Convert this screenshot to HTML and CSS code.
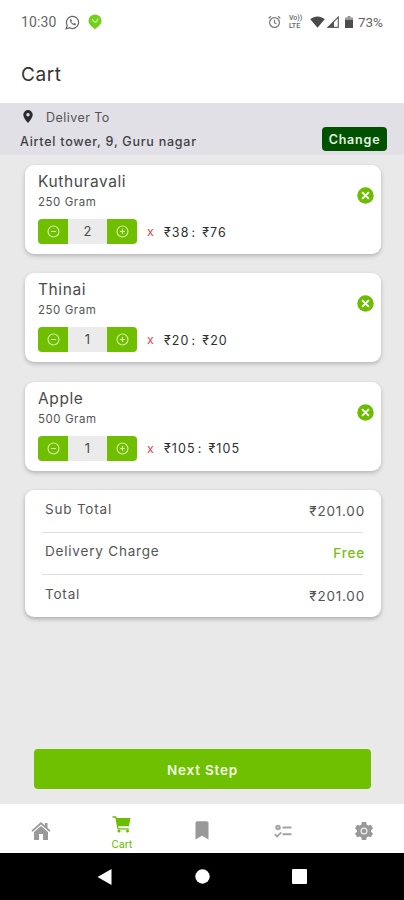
FILE: index.html
```
<!DOCTYPE html>
<html lang="en">
<head>
    <meta charset="UTF-8">
    <meta name="viewport" content="width=device-width, initial-scale=1.0">
    <title>Cart</title>
    <link rel="stylesheet" href="styles.css">
</head>
<body>
    <!-- Shared icons -->
    <svg class="icon-defs">
        <symbol id="minus" viewBox="0 0 14 14">
            <circle cx="7" cy="7" r="5.9" fill="none" stroke="#d5f3ac" stroke-width="1.2"/>
            <path d="M4.4 7h5.2" stroke="#d5f3ac" stroke-width="1.3"/>
        </symbol>
        <symbol id="plus" viewBox="0 0 14 14">
            <circle cx="7" cy="7" r="5.9" fill="none" stroke="#d5f3ac" stroke-width="1.2"/>
            <path d="M4.4 7h5.2M7 4.4v5.2" stroke="#d5f3ac" stroke-width="1.3"/>
        </symbol>
        <symbol id="remove" viewBox="0 0 18 18">
            <circle cx="9" cy="9" r="8.7" fill="#6cbd00"/>
            <path d="M5.4 5.4l7.2 7.2M12.6 5.4l-7.2 7.2" stroke="#fff" stroke-width="2"/>
        </symbol>
    </svg>

    <div class="status-bar">
        <span class="time">10:30</span>
        <svg class="whatsapp" width="15" height="15" viewBox="0 0 16 16" fill="none" stroke="#666">
            <path d="M1.3 14.7l1-3.7a6.5 6.5 0 1 1 2.6 2.6z" stroke-width="1.3"/>
            <path d="M5.3 4.6c-.6 3 2.7 6.6 5.9 6.3l.5-1.5-1.7-.9-.9.8c-1.2-.5-1.9-1.2-2.4-2.3l.7-.9-.7-1.7z" fill="#666" stroke="none"/>
        </svg>
        <svg class="app-pin" width="14" height="16" viewBox="0 0 14 16">
            <path d="M7 15.5C5.5 13 .5 11.5.5 6.7a6.5 6.2 0 0 1 13 0c0 4.8-5 6.3-6.500 8.800z" fill="#73d01a"/>
            <path d="M4 5l1.800 2.400c.9 1.100 2.600.8 3.200-.5l1-2.400" fill="none" stroke="#c5f094" stroke-width="1.3"/>
        </svg>
        <div class="status-right">
            <svg class="alarm" width="13" height="14" viewBox="0 0 13 14" fill="none" stroke="#777" stroke-width="1.2">
                <circle cx="6.5" cy="7.5" r="4.9"/>
                <path d="M6.5 4.700v3l2 1.200M.7 3.200L3 1.200M12.300 3.200L10 1.200"/>
            </svg>
            <span class="volte">Vo))<br>LTE</span>
            <svg class="wifi" width="15" height="12" viewBox="0 0 15 12">
                <path d="M.3 3.200C4.500-.4 10.500-.4 14.700 3.200L7.500 11.800z" fill="#4a4a4a"/>
            </svg>
            <svg class="signal" width="12" height="12" viewBox="0 0 12 12">
                <path d="M11.300 1v10.300H1z" fill="none" stroke="#666" stroke-width="1.2"/>
                <path d="M7 5.300v6H1z" fill="#555"/>
            </svg>
            <svg class="battery" width="8" height="12" viewBox="0 0 8 12">
                <path d="M0 1.400h2.500V0h3v1.400H8V12H0z" fill="#999"/>
                <path d="M0 4h8v8H0z" fill="#4d4d4d"/>
            </svg>
            <span class="percent">73%</span>
        </div>
    </div>

    <h1 class="page-title">Cart</h1>

    <div class="deliver">
        <div class="deliver-info">
            <div class="deliver-label">
                <svg width="10" height="13" viewBox="0 0 10 13">
                    <path fill-rule="evenodd" d="M5 0a4.700 4.700 0 0 1 4.700 4.700C9.700 8 5 13 5 13S.3 8 .3 4.700A4.700 4.700 0 0 1 5 0zm0 3a1.700 1.700 0 1 0 0 3.400A1.700 1.700 0 0 0 5 3z" fill="#2c2c30"/>
                </svg>
                <span>Deliver To</span>
            </div>
            <div class="address">Airtel tower, 9, Guru nagar</div>
        </div>
        <button class="change">Change</button>
    </div>

    <div class="content">
        <div class="item">
            <div>
                <div class="item-name">Kuthuravali</div>
                <div class="item-weight">250 Gram</div>
                <div class="item-row">
                    <div class="stepper">
                        <button><svg><use href="#minus"/></svg></button>
                        <span>2</span>
                        <button><svg><use href="#plus"/></svg></button>
                    </div>
                    <span class="times">x</span>
                    <span class="price">₹38<i>:</i></span>
                    <span class="price">₹76</span>
                </div>
            </div>
            <svg class="remove"><use href="#remove"/></svg>
        </div>

        <div class="item">
            <div>
                <div class="item-name">Thinai</div>
                <div class="item-weight">250 Gram</div>
                <div class="item-row">
                    <div class="stepper">
                        <button><svg><use href="#minus"/></svg></button>
                        <span>1</span>
                        <button><svg><use href="#plus"/></svg></button>
                    </div>
                    <span class="times">x</span>
                    <span class="price">₹20<i>:</i></span>
                    <span class="price">₹20</span>
                </div>
            </div>
            <svg class="remove"><use href="#remove"/></svg>
        </div>

        <div class="item">
            <div>
                <div class="item-name">Apple</div>
                <div class="item-weight">500 Gram</div>
                <div class="item-row">
                    <div class="stepper">
                        <button><svg><use href="#minus"/></svg></button>
                        <span>1</span>
                        <button><svg><use href="#plus"/></svg></button>
                    </div>
                    <span class="times">x</span>
                    <span class="price">₹105<i>:</i></span>
                    <span class="price">₹105</span>
                </div>
            </div>
            <svg class="remove"><use href="#remove"/></svg>
        </div>

        <!-- Totals -->
        <div class="summary">
            <div class="summary-row"><span>Sub Total</span><span class="amount">₹201.00</span></div>
            <hr>
            <div class="summary-row"><span>Delivery Charge</span><span class="amount free">Free</span></div>
            <hr>
            <div class="summary-row"><span>Total</span><span class="amount">₹201.00</span></div>
        </div>

        <button class="next">Next Step</button>
    </div>

    <div class="tabs">
        <div class="tab">
            <svg width="20" height="20" viewBox="0 0 20 20" fill="#999">
                <path d="M10 1L.4 9.500l1.200 1.300L10 3.500l8.400 7.300 1.200-1.300-3.100-2.700V2h-2.600v2.400z"/>
                <path d="M10 4.900l-7 6.200V19h5v-6h4v6h5v-7.900z"/>
            </svg>
        </div>
        <div class="tab active">
            <svg width="19" height="17" viewBox="0 0 19 17" fill="#6cbd00">
                <path d="M4 2h14.500l-1.600 8.300H6z"/>
                <path d="M.5 1h3.300l2.300 11.800h10.700" fill="none" stroke="#6cbd00" stroke-width="1.3"/>
                <circle cx="7" cy="15" r="1.5"/>
                <circle cx="15.5" cy="15" r="1.5"/>
            </svg>
            <span>Cart</span>
        </div>
        <div class="tab">
            <svg width="14" height="19" viewBox="0 0 14 19" fill="#999">
                <path d="M.5 2A1.700 1.700 0 0 1 2.200.3h9.600A1.700 1.700 0 0 1 13.500 2v16.500L7 14.700.5 18.500z"/>
            </svg>
        </div>
        <div class="tab">
            <svg width="18" height="14" viewBox="0 0 18 14" fill="none" stroke="#a3a3a3">
                <circle cx="4" cy="3.5" r="1.900" fill="#ccc" stroke-width="1.8"/>
                <path d="M8.500 3.500h9M8.500 10.300h9" stroke-width="2"/>
                <path d="M.8 10.200l2.200 2.200 4.300-4" stroke-width="1.8"/>
            </svg>
        </div>
        <div class="tab">
            <svg width="20" height="20" viewBox="0 0 20 20">
                <path d="M7.800 1h4.400l.5 2.700 1.600.9 2.600-.9 2.100 3.700L17 9.200v1.600l2 1.800-2.100 3.700-2.600-.9-1.600.9-.5 2.700H7.800l-.5-2.700-1.600-.9-2.600.9L1 12.600l2-1.800V9.200L1 7.400l2.100-3.700 2.600.9 1.600-.9z" fill="#999"/>
                <circle cx="10" cy="10" r="2.900" fill="none" stroke="#ececec" stroke-width="1.3"/>
            </svg>
        </div>
    </div>

    <div class="system-nav">
        <svg width="15" height="18" viewBox="0 0 15 18"><path d="M14.500 1v16L.5 9z" fill="#fff"/></svg>
        <svg width="15" height="15" viewBox="0 0 15 15"><circle cx="7.5" cy="7.5" r="7.2" fill="#fff"/></svg>
        <svg width="15" height="15" viewBox="0 0 15 15"><rect width="15" height="15" rx="1" fill="#fff"/></svg>
    </div>
</body>
</html>
```
FILE: styles.css
```
* {
    box-sizing: border-box;
}

body {
    margin: 0;
    width: 404px;
    height: 900px;
    display: flex;
    flex-direction: column;
    overflow: hidden;
    font-family: Inter, "Open Sans", sans-serif;
    color: #4a4a4a;
    background: #fff;
}

svg {
    display: block;
    flex: none;
}

button {
    border: none;
    padding: 0;
    font-family: inherit;
    cursor: pointer;
}

.icon-defs {
    display: none;
}

/* Status bar */
.status-bar {
    height: 44px;
    padding: 0 21px;
    display: flex;
    align-items: center;
    font-family: Roboto, sans-serif;
    color: #666;
}

.time {
    width: 35px;
    font-size: 14px;
    line-height: 16px;
    letter-spacing: 0.1px;
}

.whatsapp {
    margin-left: 9px;
}

.app-pin {
    margin-left: 8px;
}

.status-right {
    margin-left: auto;
    display: flex;
    align-items: center;
}

.alarm {
    margin-right: 8px;
}

.volte {
    width: 16px;
    font-size: 7px;
    line-height: 8px;
    font-weight: 500;
}

.wifi {
    margin-left: 5px;
}

.signal {
    margin-left: 2px;
}

.battery {
    margin-left: 6px;
}

.percent {
    margin-left: 5px;
    font-size: 13.5px;
}

.page-title {
    margin: 0;
    height: 59px;
    padding: 19px 21px 0;
    font-size: 19px;
    line-height: 24px;
    font-weight: 400;
    letter-spacing: 0.6px;
    color: #333;
}

/* Delivery address */
.deliver {
    height: 52px;
    padding: 0 17px 0 20px;
    display: flex;
    justify-content: space-between;
    background: #e1e0e6;
}

.deliver-label {
    display: flex;
    align-items: center;
    gap: 13px;
    height: 18px;
    padding-left: 3px;
    margin-top: 5px;
    font-size: 12.5px;
    letter-spacing: 0.45px;
    color: #555;
}

.deliver-label svg {
    margin-top: -1px;
}

.address {
    margin-top: 7px;
    font-size: 12.5px;
    line-height: 18px;
    font-weight: 500;
    letter-spacing: 0.75px;
    color: #414145;
    white-space: nowrap;
}

.change {
    width: 65px;
    height: 24px;
    margin-top: 24px;
    border-radius: 4px;
    background: #005200;
    color: #e4f2e0;
    font-size: 12.5px;
    font-weight: 600;
    letter-spacing: 0.8px;
}

/* Cart items */
.content {
    height: 649px;
    padding: 10px 23px 0 25px;
    background: #e9e9e9;
}

.item {
    height: 89px;
    margin-bottom: 19.3px;
    padding: 7px 7px 0 13px;
    display: flex;
    justify-content: space-between;
    border-radius: 9px;
    background: #fff;
    box-shadow: 0 2px 4px rgba(0, 0, 0, 0.22);
}

.item-name {
    font-size: 15.5px;
    line-height: 20px;
    letter-spacing: 0.6px;
}

.item-weight {
    margin-top: 1px;
    font-size: 11.5px;
    line-height: 18px;
    letter-spacing: 0.55px;
    color: #555;
}

.item-row {
    display: flex;
    align-items: center;
    margin-top: 8px;
}

.stepper {
    display: flex;
    width: 99px;
    height: 25px;
    border-radius: 4px;
    overflow: hidden;
    background: #ebebeb;
}

.stepper button {
    width: 30px;
    display: flex;
    align-items: center;
    justify-content: center;
    background: #6fbf00;
}

.stepper svg {
    width: 13px;
    height: 13px;
}

.stepper span {
    flex: 1;
    text-align: center;
    font-size: 13px;
    line-height: 25px;
}

.times {
    width: 17px;
    margin-left: 10px;
    font-size: 12.5px;
    color: #e5424d;
}

.price {
    margin-right: 6px;
    padding-top: 1px;
    font-size: 12.5px;
    letter-spacing: 1.1px;
    color: #303030;
    white-space: nowrap;
}

.price i {
    margin-left: 2px;
    font-style: normal;
}

.remove {
    width: 17px;
    height: 17px;
    margin-top: 15px;
}

/* Totals */
.summary {
    height: 127px;
    padding: 0 16px 0 20px;
    border-radius: 9px;
    background: #fff;
    box-shadow: 0 2px 4px rgba(0, 0, 0, 0.27);
}

.summary-row {
    display: flex;
    justify-content: space-between;
    height: 42px;
    padding-top: 9px;
    font-size: 13.5px;
    line-height: 20px;
    letter-spacing: 0.8px;
    color: #555;
}

.summary hr {
    height: 1px;
    margin: 0 2px -0.5px -3px;
    border: none;
    background: #dedede;
}

.amount {
    margin-top: 2px;
    font-size: 13.5px;
}

.free {
    color: #77c10f;
    font-weight: 500;
}

.next {
    display: block;
    width: 337px;
    height: 40px;
    margin: 132px 0 0 9px;
    border-radius: 4px;
    background: #6fc000;
    color: #f2fae6;
    font-size: 13.5px;
    line-height: 42px;
    font-weight: 600;
    letter-spacing: 0.8px;
}

/* Bottom tabs */
.tabs {
    height: 49px;
    display: flex;
    padding-left: 1px;
}

.tab {
    flex: 1;
    display: flex;
    flex-direction: column;
    align-items: center;
    justify-content: center;
    padding-top: 4px;
}

.active {
    justify-content: flex-start;
    padding-top: 12px;
    font-family: Roboto, sans-serif;
    font-size: 11px;
    line-height: 14px;
    color: #6cbd00;
}

.active span {
    margin-top: 5px;
}

.system-nav {
    height: 47px;
    padding: 0 97px;
    display: flex;
    align-items: center;
    justify-content: space-between;
    background: #000;
}
```
